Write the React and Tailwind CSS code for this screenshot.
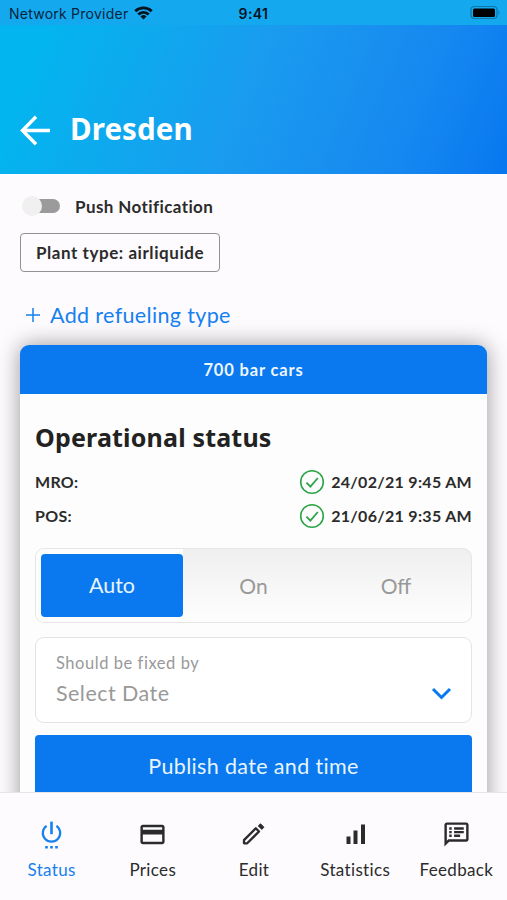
import React from "react";
import { MdCreditCard, MdOutlineSpeakerNotes } from "react-icons/md";

function StatusBar() {
  return (
    <div className="grid h-[25px] grid-cols-3 items-center bg-[#14a9ef] pl-[9px] pr-[9px] text-[#08243a]">
      <div className="flex items-center gap-[6px] pt-[2px] font-['Inter',sans-serif] text-[14px] tracking-[0.24px] whitespace-nowrap">
        Network Provider
        <svg className="-mt-[2px]" width="19" height="14" viewBox="0 0 19 14" fill="none" stroke="#04121d" strokeWidth="2.9">
          <path d="M1.3 5.2a11.7 11.7 0 0 1 16.4 0" />
          <path d="M4.3 8.5a7.4 7.4 0 0 1 10.4 0" />
          <path d="M9.5 13.5 6.5 10.5a4.3 4.3 0 0 1 6 0z" fill="#04121d" stroke="none" />
        </svg>
      </div>
      <div className="pt-[2px] text-center font-['Inter',sans-serif] text-[14px] font-semibold tracking-[0.4px] text-[#04121d]">9:41</div>
      <svg className="-mr-[3px] justify-self-end" width="31" height="15" viewBox="0 0 31 15">
        <rect x="1" y="1.5" width="26" height="12" rx="3.5" fill="none" stroke="#0d77a9" strokeWidth="1.2" />
        <rect x="3" y="3.5" width="22" height="8.5" rx="1.5" fill="#000" />
        <path d="M28.5 5.2q2 2.3 0 4.6z" fill="#0d77a9" />
      </svg>
    </div>
  );
}

function CheckRow({ label, value }) {
  return (
    <div className="flex h-[34px] items-center text-[16px] font-bold tracking-[0.3px] text-[#2b2b2b]">
      <span>{label}</span>
      <svg className="mr-[6px] ml-auto" width="26" height="26" viewBox="0 0 26 26" fill="none" stroke="#2da548" strokeWidth="1.6">
        <circle cx="13" cy="13" r="11.3" />
        <path d="m7.4 13.6 4 4 7.4-8.6" strokeWidth="1.8" />
      </svg>
      <span>{value}</span>
    </div>
  );
}

function PowerIcon({ size }) {
  return (
    <svg width={size} height={size} viewBox="0 0 29 29" fill="none" stroke="currentColor" strokeWidth="2.2">
      <path d="M9.6 5.8a8.7 8.7 0 1 0 9.8 0" />
      <path d="M14.5 1.6v12.6" strokeWidth="2.6" />
      <path d="M8.2 27.2h2.6M13.2 27.2h2.6M18.2 27.2h2.6" strokeWidth="2.6" />
    </svg>
  );
}

function PencilIcon({ size }) {
  return (
    <svg width={size} height={size} viewBox="0 0 29 29" fill="none" stroke="currentColor" strokeWidth="2.3" strokeLinejoin="round">
      <path d="M5 23.3v-3.2L16.8 8.3l3.2 3.2L8.2 23.3z" />
      <path d="m19.3 5.9 2.2-2.1 3.4 3.4-2.1 2.2z" fill="currentColor" strokeWidth="1" />
    </svg>
  );
}

function BarsIcon({ size }) {
  return (
    <svg width={size} height={size} viewBox="0 0 29 29" fill="currentColor">
      <rect x="5.5" y="16.5" width="4" height="7.5" />
      <rect x="12.5" y="10.5" width="4" height="13.5" />
      <rect x="20" y="4.5" width="4" height="19.5" />
    </svg>
  );
}

const tabs = [
  { label: "Status", icon: PowerIcon, active: true },
  { label: "Prices", icon: MdCreditCard },
  { label: "Edit", icon: PencilIcon },
  { label: "Statistics", icon: BarsIcon },
  { label: "Feedback", icon: MdOutlineSpeakerNotes },
];

export default function App() {
  return (
    <div className="flex h-[900px] w-[507px] flex-col overflow-hidden bg-[#fdfbfe] font-['Lato',sans-serif] text-[#2b2b2b]">
      <header className="h-[174px] shrink-0 bg-[linear-gradient(112deg,#03b5ee_10%,#1a9bef_50%,#1688f0_80%,#0877f0_100%)]">
        <StatusBar />
        <div className="flex items-center pt-[88px] pl-[20px] text-white">
          <svg width="31" height="31" viewBox="0 0 31 31" fill="none" stroke="currentColor" strokeWidth="3.4">
            <path d="M30 15.5H3M16 1.8 2.5 15.5 16 29.2" />
          </svg>
          <h1 className="-mt-[2px] ml-[19px] font-['Noto_Sans',sans-serif] text-[29.5px] leading-[36px] font-bold tracking-[0.1px]">Dresden</h1>
        </div>
      </header>

      <main className="min-h-0 flex-1 overflow-hidden px-[20px]">
        <div className="flex h-[59px] items-center pt-[5px] pl-[2px]">
          <div className="flex h-[20px] w-[38px] items-center">
            <div className="z-10 size-[20px] shrink-0 rounded-full bg-[#f0f0f0]" />
            <div className="-ml-[10px] h-[14px] w-[28px] rounded-full bg-[#9b9b9b]" />
          </div>
          <span className="mt-px ml-[15px] text-[17px] font-bold tracking-[0.4px]">Push Notification</span>
        </div>
        <div className="flex h-[39px] w-[200px] items-center justify-center rounded-[4px] border border-[#919191] text-[17px] font-bold tracking-[0.56px]">
          Plant type: airliquide
        </div>
        <div className="mt-[28px] flex h-[30px] items-center pl-[6px] text-[#1680ee]">
          <svg width="14" height="14" viewBox="0 0 14 14" stroke="currentColor" strokeWidth="1.5">
            <path d="M7 0v14M0 7h14" />
          </svg>
          <span className="ml-[10px] text-[21.5px] tracking-[0.35px]">Add refueling type</span>
        </div>

        <section className="mt-[15px] h-[520px] rounded-t-[9px] bg-[#fdfdfd] shadow-[0_0_22px_rgba(0,0,0,0.4)]">
          <div className="flex h-[49px] items-center justify-center rounded-t-[9px] bg-[#0a78ee] pt-[2px] text-[16.5px] font-bold tracking-[0.85px] text-[#eef6ff]">
            700 bar cars
          </div>
          <div className="px-[15px] pt-[25px]">
            <h2 className="mb-[10px] font-['Noto_Sans',sans-serif] text-[25px] leading-[36px] font-bold tracking-[0.18px] text-[#222]">Operational status</h2>
            <CheckRow label="MRO:" value="24/02/21 9:45 AM" />
            <CheckRow label="POS:" value="21/06/21 9:35 AM" />
            <div className="mt-[15px] grid h-[75px] grid-cols-[147px_1fr_1fr] rounded-[9px] border border-[#e6e6e6] bg-gradient-to-b from-[#efefef] to-[#fefefe] text-[22px] text-[#999]">
              <div className="rounded-l-[8px] bg-[#fdfdfd] p-[5px] pr-0">
                <div className="flex h-full items-center justify-center rounded-[4px] bg-[#0a78ee] text-[21.5px] text-[#e8f5ff]">Auto</div>
              </div>
              <div className="flex items-center justify-center pr-[3px] text-[21px]">On</div>
              <div className="flex items-center justify-center pr-[6px] text-[21px]">Off</div>
            </div>
            <div className="mt-[14px] flex h-[86px] items-center justify-between rounded-[9px] border border-[#e4e4e4] bg-white pr-[19px] pl-[20px] text-[#999]">
              <div>
                <div className="mt-[1px] text-[16.5px] leading-[24px] tracking-[0.55px]">Should be fixed by</div>
                <div className="mt-px text-[21.5px] leading-[34px] tracking-[0.45px]">Select Date</div>
              </div>
              <svg className="mt-[28px]" width="21" height="14" viewBox="0 0 21 14" fill="none" stroke="#0a78ee" strokeWidth="3">
                <path d="m2 2 8.5 8.5L19 2" />
              </svg>
            </div>
            <div className="mt-[12px] flex h-[62px] items-center justify-center rounded-[4px] bg-[#0a78ee] text-[21.5px] tracking-[0.35px] text-[#e8f5ff]">
              Publish date and time
            </div>
          </div>
        </section>
      </main>

      <nav className="z-10 grid h-[108px] shrink-0 grid-cols-5 border-t border-[#e6e3ea] bg-[#fdfbfe] pt-[27px] pl-px">
        {tabs.map(({ label, icon: Icon, active }) => (
          <div key={label} className={active ? "flex flex-col items-center text-[#1680ee]" : "flex flex-col items-center text-[#2b2b2b]"}>
            <Icon size={29} />
            <span className="mt-[9px] text-[17px] leading-[24px] tracking-[0.35px]">{label}</span>
          </div>
        ))}
      </nav>
    </div>
  );
}
